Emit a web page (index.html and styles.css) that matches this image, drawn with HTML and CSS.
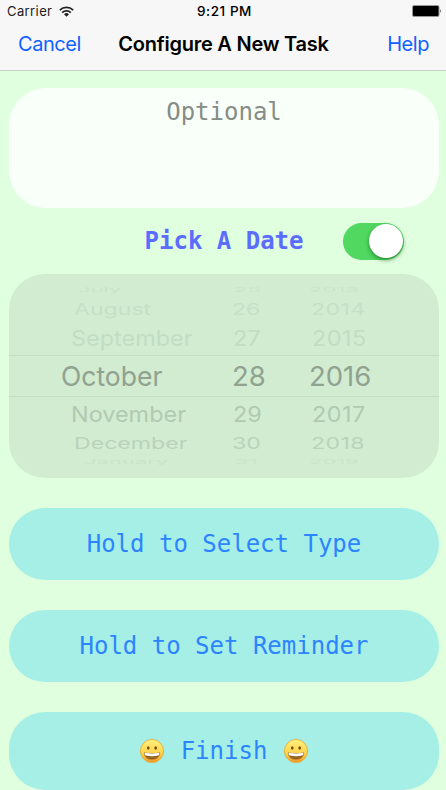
FILE: index.html
```html
<!DOCTYPE html>
<html lang="en">
<head>
<meta charset="utf-8">
<title>Configure A New Task</title>
<link rel="stylesheet" href="styles.css">
</head>
<body>
<svg class="defs" width="0" height="0" aria-hidden="true">
  <defs>
    <linearGradient id="skin" x1="0" y1="0" x2="0" y2="1">
      <stop offset="0" stop-color="#fff27c"/>
      <stop offset=".6" stop-color="#fcd34c"/>
      <stop offset="1" stop-color="#ee9a2a"/>
    </linearGradient>
    <symbol id="grin" viewBox="0 0 24 24">
      <circle cx="12" cy="12" r="11.6" fill="url(#skin)" stroke="#e9a53a" stroke-width=".8"/>
      <ellipse cx="8.3" cy="9" rx="1.3" ry="1.800" fill="#7a4a12"/>
      <ellipse cx="15.7" cy="9" rx="1.3" ry="1.800" fill="#7a4a12"/>
      <path d="M4 13.2Q12 15 20 13.2C20 18 16.500 20.600 12 20.600S4 18 4 13.200Z" fill="#9a6420"/>
      <path d="M4.500 13.600Q12 15.300 19.500 13.600L19 16.300Q12 18.200 5 16.300Z" fill="#fff"/>
    </symbol>
  </defs>
</svg>
<header class="top">
  <div class="status">
    <div class="carrier"><span>Carrier</span>
      <svg class="wifi" viewBox="0 0 15 11"><g fill="none" stroke="#222" stroke-width="1.700"><path d="M.8 4.100a9.600 9.600 0 0 1 13.400 0"/><path d="M3.200 6.600a6.200 6.200 0 0 1 8.600 0"/></g><path d="M7.500 10.800 5 8.300a3.600 3.600 0 0 1 5 0Z" fill="#222"/></svg>
    </div>
    <div class="clock">9:21 PM</div>
    <svg class="battery" viewBox="0 0 30 12"><rect x=".5" y=".5" width="26.500" height="11" rx="1.500" fill="#000" stroke="#999"/><path d="M28 4q1.500 2 0 4Z" fill="#222"/></svg>
  </div>
  <nav class="bar">
    <a class="link">Cancel</a>
    <h1 class="title">Configure A New Task</h1>
    <a class="link">Help</a>
  </nav>
</header>
<main class="form">
  <div class="note">Optional</div>
  <div class="date-row">
    <span class="date-label">Pick A Date</span>
    <span class="switch"><span class="knob"></span></span>
  </div>
  <div class="picker">
    <div class="row r-3"><span>July</span><span>25</span><span>2013</span></div>
    <div class="row r-2"><span>August</span><span>26</span><span>2014</span></div>
    <div class="row r-1"><span>September</span><span>27</span><span>2015</span></div>
    <div class="row current"><span>October</span><span>28</span><span>2016</span></div>
    <div class="row r1"><span>November</span><span>29</span><span>2017</span></div>
    <div class="row r2"><span>December</span><span>30</span><span>2018</span></div>
    <div class="row r3"><span>January</span><span>31</span><span>2019</span></div>
  </div>
  <div class="button">Hold to Select Type</div>
  <div class="button">Hold to Set Reminder</div>
  <div class="button finish"><svg class="emoji"><use href="#grin"/></svg><span>Finish</span><svg class="emoji"><use href="#grin"/></svg></div>
</main>
</body>
</html>
```
FILE: styles.css
```css
* { box-sizing: border-box; }
html, body { height: 790px; overflow: hidden; }
body { margin: 0; background: #dfffdf; font-family: Inter, "Liberation Sans", sans-serif; color: #000; display: flex; flex-direction: column; }
.defs { position: absolute; }
.top { height: 71px; flex: none; background: #f7f7f7; border-bottom: 1px solid #c9d2c9; }
.status { height: 22px; display: grid; grid-template-columns: 1fr auto 1fr; align-items: center; padding: 0 4px 0 7px; font-size: 13px; }
.carrier { display: flex; align-items: center; gap: 7px; color: #222; letter-spacing: .4px; }
.wifi { width: 15px; height: 11px; }
.clock { font-weight: 500; font-size: 13.500px; letter-spacing: .55px; }
.battery { width: 30px; height: 12px; justify-self: end; }
.bar { height: 44px; display: grid; grid-template-columns: 1fr auto 1fr; align-items: center; padding: 0 17px 0 18px; }
.link { font-size: 20px; letter-spacing: -.45px; color: #0f62ff; }
.link:last-child { justify-self: end; }
.title { margin: 0; font-size: 20px; font-weight: 600; letter-spacing: -.24px; }
.form { padding: 17px 7px 0 9px; display: flex; flex-direction: column; font-family: "DejaVu Sans Mono", monospace; font-size: 24px; }
.note { height: 120px; flex: none; border-radius: 37px; background: #f9fff9; color: #868c86; text-align: center; padding-top: 10px; line-height: 28px; }
.date-row { height: 66px; flex: none; display: flex; align-items: center; justify-content: flex-end; gap: 39px; padding-right: 35.500px; }
.date-label { font-weight: 700; color: #5c6cff; }
.switch { width: 61px; height: 37px; border-radius: 19px; background: #50d860; padding: 1.500px 1px; display: flex; justify-content: flex-end; }
.knob { width: 34px; height: 34px; border-radius: 50%; background: #fff; box-shadow: 0 2px 4px rgba(0,60,0,.5); }
.picker { height: 204px; flex: none; border-radius: 36px; background: #d2ecd2; overflow: hidden; padding-top: 9px; font-family: Inter, "Liberation Sans", sans-serif; font-size: 22px; color: #90a290; }
.row { display: grid; align-items: center; justify-content: start; white-space: nowrap; }
.row span { justify-self: start; transform-origin: 0 50%; }
/* Rows shrink and fade as they turn away from the selected line. */
.current { height: 42px; padding-left: 52px; grid-template-columns: 171px 77px auto; font-size: 27.500px; border-top: 1px solid #c6dfc8; border-bottom: 1px solid #c6dfc8; }
.current span:first-child { transform: scaleX(.965); }
.r-3, .r3 { height: 14px; line-height: 14px; }
.r-3 { padding-left: 69px; grid-template-columns: 156px 75px auto; color: #c8e4c9; }
.r3 { padding-left: 75px; grid-template-columns: 151px 74px auto; color: #c8e4c9; }
.r-3 span, .r3 span { transform: scale(1, .3); }
.r-2, .r2 { height: 24px; line-height: 24px; padding-left: 65px; grid-template-columns: 158px 79px auto; }
.r-2 span, .r2 span { transform: scale(1.050, .74); }
.r-1, .r1 { height: 34px; line-height: 34px; padding-left: 62px; grid-template-columns: 162px 79px auto; }
.r-1 span, .r1 span { transform: scaleX(1.065); }
.r-1 span:last-child, .r1 span:last-child,
.r-2 span:last-child, .r2 span:last-child { letter-spacing: .4px; }
.r-2 { color: #c5e0c6; }
.r-1 { color: #c2ddc3; }
.r1 { color: #b0cab1; }
.r2 { color: #b8d3ba; }
.button { height: 72px; flex: none; margin-top: 30px; border-radius: 36px; background: #a5efe6; color: #2d84ff; display: flex; align-items: center; justify-content: center; }
.finish { height: 78px; gap: 16.500px; }
.emoji { width: 24px; height: 24px; }
```
